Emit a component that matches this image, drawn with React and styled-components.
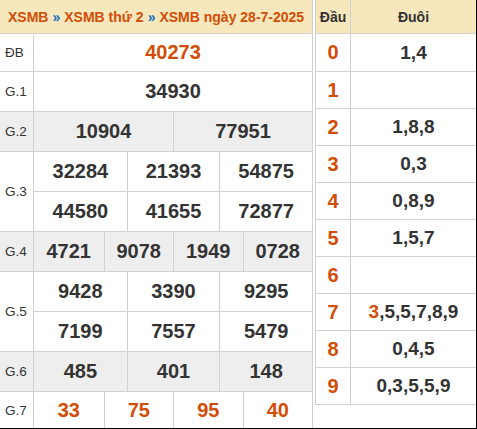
import React from "react";
import styled, { createGlobalStyle } from "styled-components";

const Global = createGlobalStyle`
  html, body { margin: 0; padding: 0; background: #fff; }
  body { font-family: "Liberation Sans", Arial, sans-serif; color: #333; }
`;

const Frame = styled.div`
  display: flex;
  align-items: flex-start;
  gap: 2px;
  width: 476px;
  height: 428px;
  border-right: 1px solid #000;
  border-bottom: 1px solid #000;
  overflow: hidden;
`;

const LeftTable = styled.div`
  width: 312px;
  border-right: 1px solid #d0d0d0;
  display: flex;
  flex-direction: column;
  height: 428px;
`;

const HeadBar = styled.div`
  height: 33px;
  border-bottom: 1px solid #d0d0d0;
  background: #f7e7bd;
  display: flex;
  align-items: center;
  padding-left: 8px;
  font-size: 14px;
  font-weight: bold;
  color: #d24d06;
  white-space: nowrap;
`;

const Sep = styled.span`
  color: #1a6fc0;
  margin: 0 4px;
`;

const Row = styled.div`
  display: flex;
  height: ${(p) => p.$h}px;
  border-bottom: ${(p) => (p.$last ? "none" : "1px solid #d0d0d0")};
  background: ${(p) => (p.$grey ? "#eeeeee" : "#fff")};
`;

const Label = styled.div`
  width: 34px;
  border-right: 1px solid #d0d0d0;
  display: flex;
  align-items: center;
  padding-left: 5px;
  box-sizing: border-box;
  font-size: 13.5px;
  color: #333;
`;

const Values = styled.div`
  flex: 1;
  display: flex;
  flex-direction: column;
`;

const Line = styled.div`
  flex: 1;
  display: grid;
  grid-template-columns: repeat(${(p) => p.$cols}, 1fr);
  border-bottom: ${(p) => (p.$divide ? "1px solid #d0d0d0" : "none")};
`;

const Num = styled.div`
  display: flex;
  align-items: center;
  justify-content: center;
  font-size: 20px;
  font-weight: bold;
  color: ${(p) => (p.$hot ? "#d24d06" : "#333")};
  & + & { border-left: 1px solid #d0d0d0; }
`;

const RightTable = styled.div`
  flex: 1;
  border-left: 1px solid #d0d0d0;
  border-bottom: 1px solid #d0d0d0;
  display: flex;
  flex-direction: column;
`;

const RRow = styled.div`
  display: grid;
  grid-template-columns: 34px 1fr;
  height: ${(p) => p.$h}px;
  border-bottom: ${(p) => (p.$last ? "none" : "1px solid #d0d0d0")};
  background: ${(p) => (p.$head ? "#f7e7bd" : "#fff")};
`;

const Head = styled.div`
  display: flex;
  align-items: center;
  justify-content: center;
  font-size: 14px;
  font-weight: bold;
  color: #333;
  & + & { border-left: 1px solid #d0d0d0; }
`;

const Dau = styled.div`
  display: flex;
  align-items: center;
  justify-content: center;
  font-size: 20px;
  font-weight: bold;
  color: #d24d06;
`;

const Duoi = styled.div`
  display: flex;
  align-items: center;
  justify-content: center;
  font-size: 19px;
  font-weight: bold;
  color: #333;
  border-left: 1px solid #d0d0d0;
`;

const Hot = styled.span`
  color: #d24d06;
`;

const prizes = [
  { label: "ĐB", lines: [["40273"]], hot: true, h: 37 },
  { label: "G.1", lines: [["34930"]], h: 39 },
  { label: "G.2", lines: [["10904", "77951"]], grey: true, h: 39 },
  { label: "G.3", lines: [["32284", "21393", "54875"], ["44580", "41655", "72877"]], h: 79 },
  { label: "G.4", lines: [["4721", "9078", "1949", "0728"]], grey: true, h: 39 },
  { label: "G.5", lines: [["9428", "3390", "9295"], ["7199", "7557", "5479"]], h: 79 },
  { label: "G.6", lines: [["485", "401", "148"]], grey: true, h: 39 },
  { label: "G.7", lines: [["33", "75", "95", "40"]], hot: true, h: 36, last: true },
];

const loto = [
  ["0", "1,4"],
  ["1", ""],
  ["2", "1,8,8"],
  ["3", "0,3"],
  ["4", "0,8,9"],
  ["5", "1,5,7"],
  ["6", ""],
  ["7", "HOT"],
  ["8", "0,4,5"],
  ["9", "0,3,5,5,9"],
];

export default function App() {
  return (
    <>
      <Global />
      <Frame>
        <LeftTable>
          <HeadBar>
            XSMB<Sep>»</Sep>XSMB thứ 2<Sep>»</Sep>XSMB ngày 28-7-2025
          </HeadBar>
          {prizes.map((p) => (
            <Row key={p.label} $h={p.h} $grey={p.grey} $last={p.last}>
              <Label>{p.label}</Label>
              <Values>
                {p.lines.map((ln, i) => (
                  <Line key={i} $cols={ln.length} $divide={i < p.lines.length - 1}>
                    {ln.map((n) => (
                      <Num key={n} $hot={p.hot}>{n}</Num>
                    ))}
                  </Line>
                ))}
              </Values>
            </Row>
          ))}
        </LeftTable>
        <RightTable>
          <RRow $head $h={33}>
            <Head>Đầu</Head>
            <Head>Đuôi</Head>
          </RRow>
          {loto.map(([d, t], i) => (
            <RRow key={d} $h={i === 0 ? 37 : 36} $last={i === loto.length - 1}>
              <Dau>{d}</Dau>
              <Duoi>
                {t === "HOT" ? (
                  <>
                    <Hot>3</Hot>,5,5,7,8,9
                  </>
                ) : (
                  t
                )}
              </Duoi>
            </RRow>
          ))}
        </RightTable>
      </Frame>
    </>
  );
}
